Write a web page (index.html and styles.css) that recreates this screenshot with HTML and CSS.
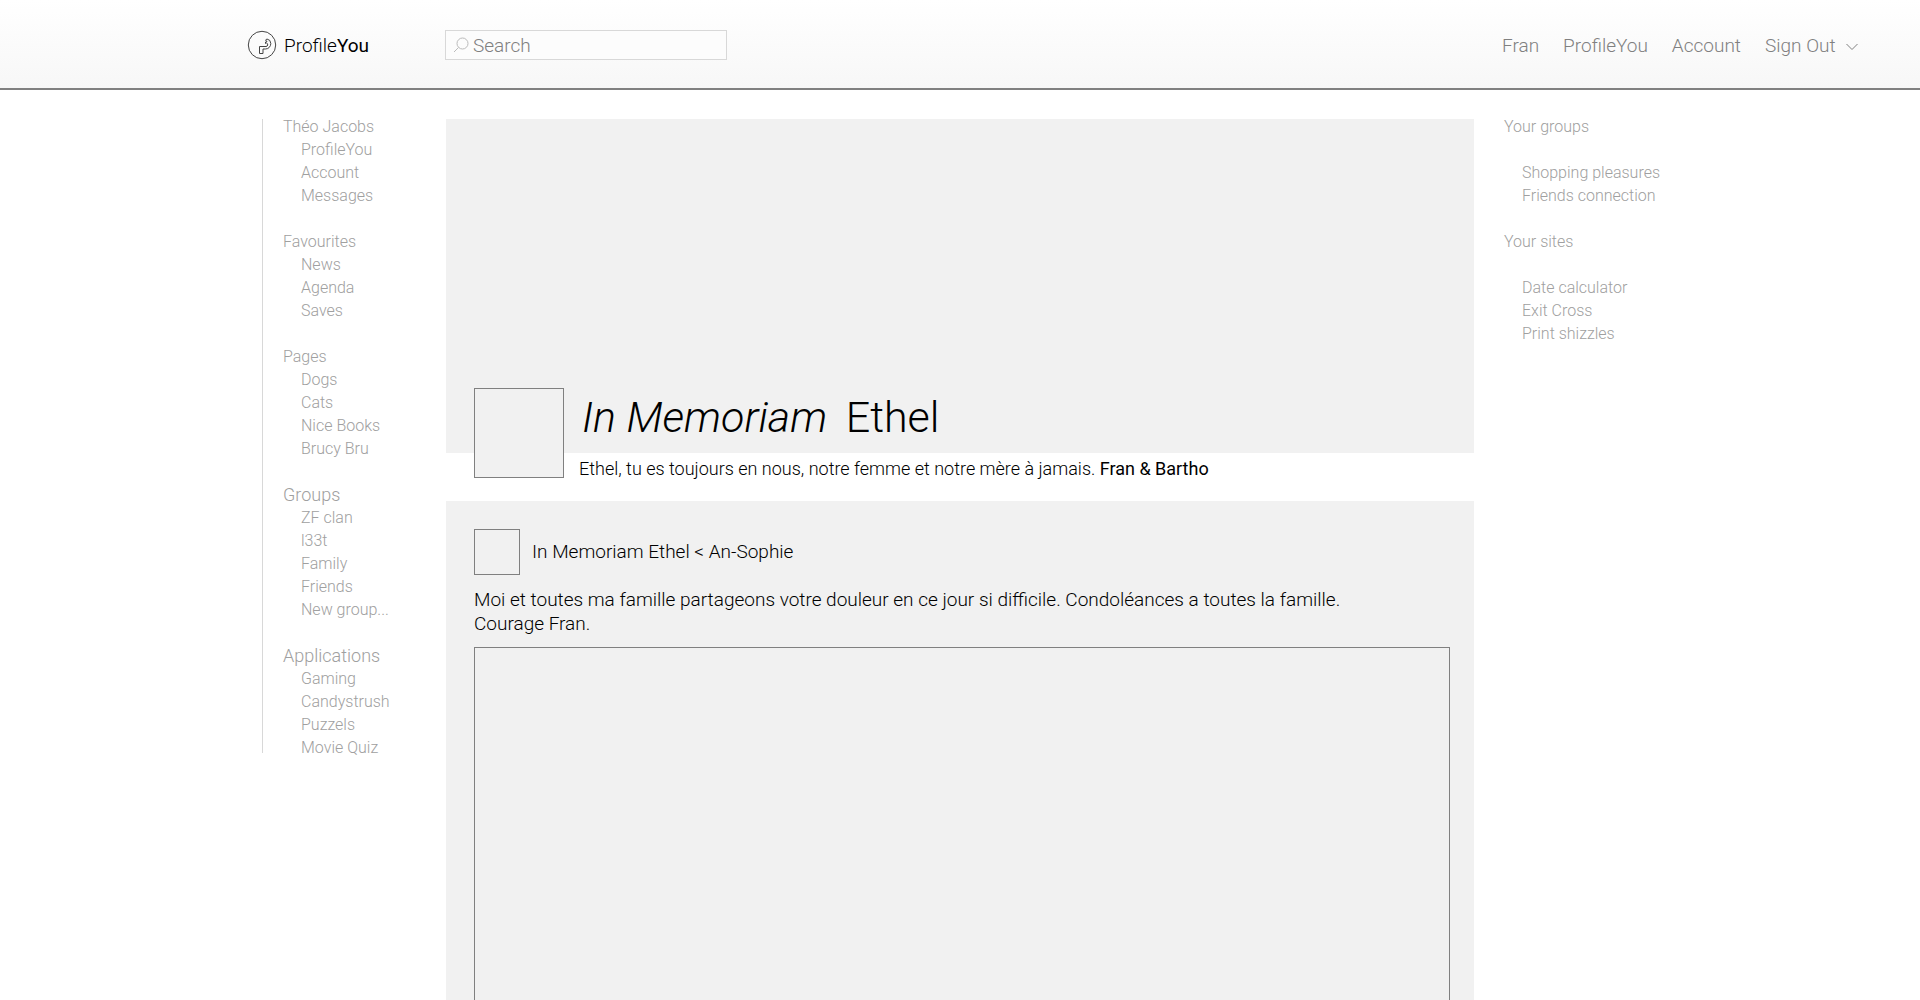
FILE: index.html
```html
<!DOCTYPE html>
<html lang="fr">
<head>
  <meta charset="UTF-8" />
  <meta name="viewport" content="width=device-width, initial-scale=1.0">
  <title>ProfileYou - In Memoriam Ethel</title>
  <link rel="stylesheet" href="styles.css">
</head>
<body>

  <header class="topbar">
    <a class="brand" href="#">
      <svg class="logo" viewBox="0 0 30 30" width="30" height="30">
        <circle cx="15" cy="15" r="13.700" />
        <path d="M12.500 23.500v-7h6.500a1.800 1.800 0 0 0 .5-3.500l-1 .5v-1.500l1.500-.5-1.500-1.500 1.500-1a4.600 4.600 0 0 1 3.800 4.500c0 3-2.300 5.500-5.300 5.500h-2.500v4.500z" />
      </svg>
      <span>Profile<b>You</b></span>
    </a>

    <form class="search" role="search">
      <label for="search">
        <svg viewBox="0 0 16 16" width="16" height="16">
          <circle cx="9.500" cy="6.500" r="5.500" />
          <path d="M5.500 10.500L1 15" />
        </svg>
      </label>
      <input type="search" id="search" placeholder="Search" aria-label="Search">
    </form>

    <nav class="menu">
      <a href="#">Fran</a>
      <a href="#">ProfileYou</a>
      <a href="#">Account</a>
      <button type="button">Sign Out
        <svg viewBox="0 0 12 8" width="12" height="8"><path d="M.5 1L6 6.500 11.500 1" /></svg>
      </button>
    </nav>
  </header>

  <div class="page">
    <nav class="side side-left">
      <section>
        <h2>Théo Jacobs</h2>
        <ul>
          <li><a href="#">ProfileYou</a></li>
          <li><a href="#">Account</a></li>
          <li><a href="#">Messages</a></li>
        </ul>
      </section>
      <section>
        <h2>Favourites</h2>
        <ul>
          <li><a href="#">News</a></li>
          <li><a href="#">Agenda</a></li>
          <li><a href="#">Saves</a></li>
        </ul>
      </section>
      <section>
        <h2>Pages</h2>
        <ul>
          <li><a href="#">Dogs</a></li>
          <li><a href="#">Cats</a></li>
          <li><a href="#">Nice Books</a></li>
          <li><a href="#">Brucy Bru</a></li>
        </ul>
      </section>
      <section>
        <h2 class="big">Groups</h2>
        <ul>
          <li><a href="#">ZF clan</a></li>
          <li><a href="#">l33t</a></li>
          <li><a href="#">Family</a></li>
          <li><a href="#">Friends</a></li>
          <li><a href="#">New group...</a></li>
        </ul>
      </section>
      <section>
        <h2 class="big">Applications</h2>
        <ul>
          <li><a href="#">Gaming</a></li>
          <li><a href="#">Candystrush</a></li>
          <li><a href="#">Puzzels</a></li>
          <li><a href="#">Movie Quiz</a></li>
        </ul>
      </section>
    </nav>

    <main>
      <section class="profile">
        <div class="cover">
          <h1><em>In Memoriam</em> Ethel</h1>
        </div>
        <div class="avatar"></div>
        <p class="tagline">Ethel, tu es toujours en nous, notre femme et notre mère à jamais. <b>Fran &amp; Bartho</b></p>
      </section>

      <article class="post">
        <div class="post-head">
          <div class="thumb"></div>
          <a href="#">In Memoriam Ethel &lt; An-Sophie</a>
        </div>
        <p>Moi et toutes ma famille partageons votre douleur en ce jour si difficile. Condoléances a toutes la famille.<br>Courage Fran.</p>
        <div class="photo"></div>
      </article>
    </main>

    <nav class="side side-right">
      <section>
        <h2>Your groups</h2>
        <ul>
          <li><a href="#">Shopping pleasures</a></li>
          <li><a href="#">Friends connection</a></li>
        </ul>
      </section>
      <section>
        <h2>Your sites</h2>
        <ul>
          <li><a href="#">Date calculator</a></li>
          <li><a href="#">Exit Cross</a></li>
          <li><a href="#">Print shizzles</a></li>
        </ul>
      </section>
    </nav>
  </div>

</body>
</html>
```

FILE: styles.css
```css
:root {
  --panel: #f1f1f1;
  --line: #808080;
  --line-light: #d8d8d8;
  --muted: #a0a0a0;
  --menu: #808080;
}

* {
  box-sizing: border-box;
}

body {
  font-family: Roboto, 'Liberation Sans', sans-serif;
  font-weight: 300;
  color: #000;
  background: #fff;
  margin: 0;
}

h1, h2, p, ul {
  margin: 0;
  padding: 0;
  font-weight: 300;
}

ul {
  list-style: none;
}

a {
  color: inherit;
  text-decoration: none;
}

b {
  font-weight: 400;
}

svg {
  fill: none;
  stroke: currentColor;
}

.topbar, .page {
  display: grid;
  grid-template-columns: 445px 1fr 445px;
}

.topbar {
  align-items: center;
  height: 90px;
  padding-top: 2px;
  border-bottom: 2px solid var(--line);
  background: linear-gradient(#fff, #f7f7f7);
}

.brand {
  display: flex;
  align-items: center;
  gap: 7px;
  padding-left: 247px;
  font-size: 19px;
}

.logo {
  color: #444;
}

.search {
  display: flex;
  align-items: center;
  width: 282px;
  height: 30px;
  border: 1px solid var(--line-light);
  padding-left: 7px;
  background: #fcfcfc;
}

.search label {
  display: flex;
  color: #bbb;
}

.search input {
  flex: 1;
  min-width: 0;
  border: none;
  outline: none;
  padding: 0 4px;
  background: none;
  font: inherit;
  font-size: 19px;
}

.search input::placeholder {
  color: var(--menu);
}

.menu {
  display: flex;
  align-items: center;
  gap: 24px;
  padding-left: 27px;
  color: var(--menu);
  font-size: 19px;
  white-space: nowrap;
}

.menu button {
  display: flex;
  align-items: center;
  gap: 10px;
  border: none;
  padding: 0;
  background: none;
  color: inherit;
  font: inherit;
  cursor: pointer;
}

.menu svg {
  margin-top: 4px;
}

.page {
  padding-top: 29px;
  align-items: start;
}

.side {
  color: var(--muted);
  font-size: 16px;
  line-height: 23px;
}

.side h2 {
  font-size: 16px;
}

.side h2.big {
  font-size: 18px;
}

.side ul {
  padding-left: 18px;
}

.side section {
  margin-bottom: 23px;
}

.side section:first-child {
  margin-top: -4px;
}

.side section:last-child {
  margin-bottom: -6px;
}

.side-left {
  margin-left: 262px;
  border-left: 1px solid var(--line-light);
  padding-left: 20px;
}

.side-right {
  padding-left: 29px;
}

.side-right h2 {
  margin-bottom: 23px;
}

main {
  margin: 0 1px;
}

.profile {
  position: relative;
}

.cover {
  display: flex;
  align-items: flex-end;
  height: 334px;
  padding: 0 28px 11px 136px;
  background: var(--panel);
}

h1 {
  font-size: 43px;
  line-height: 50px;
}

h1 em {
  margin-right: 8px;
}

/* overlaps the bottom edge of the cover */
.avatar {
  position: absolute;
  left: 28px;
  top: 269px;
  width: 90px;
  height: 90px;
  border: 1px solid var(--line);
  background: var(--panel);
}

.tagline {
  height: 48px;
  padding-left: 133px;
  font-size: 18px;
  line-height: 32px;
}

.post {
  padding: 28px 24px 24px 28px;
  background: var(--panel);
  font-size: 19px;
  line-height: 24px;
}

.post-head {
  display: flex;
  align-items: center;
  gap: 12px;
  margin-bottom: 13px;
}

.thumb {
  width: 46px;
  height: 46px;
  border: 1px solid var(--line);
}

.photo {
  height: 600px;
  margin-top: 11px;
  border: 1px solid var(--line);
}
```
